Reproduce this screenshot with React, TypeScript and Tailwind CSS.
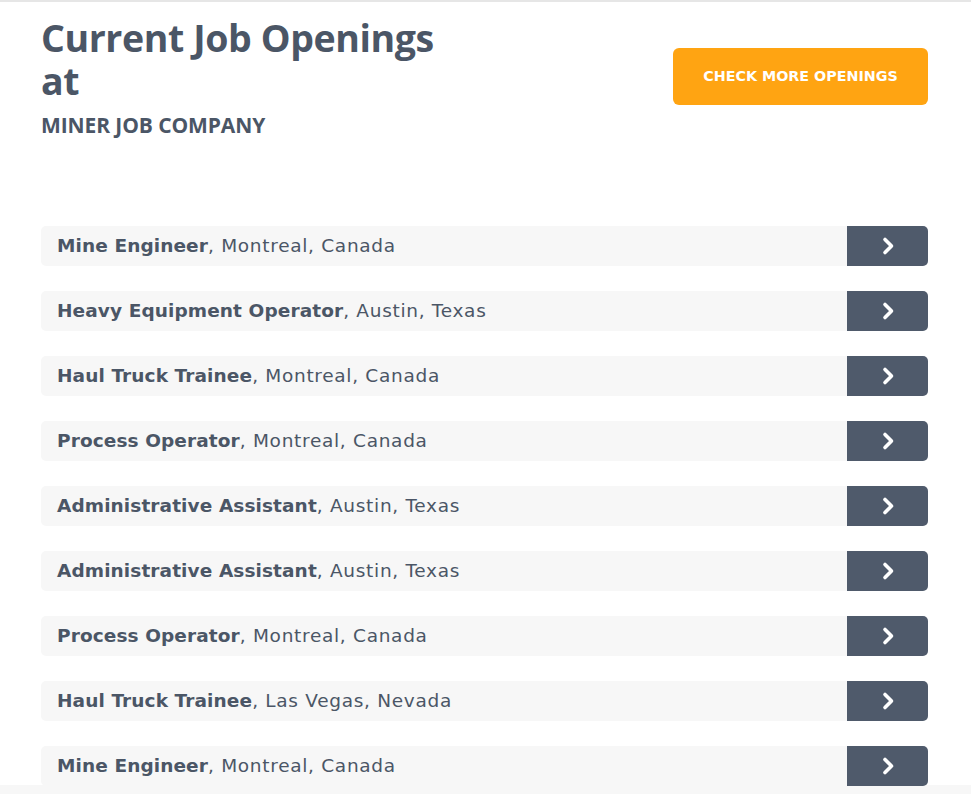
const jobs = [
  { title: 'Mine Engineer', place: 'Montreal, Canada' },
  { title: 'Heavy Equipment Operator', place: 'Austin, Texas' },
  { title: 'Haul Truck Trainee', place: 'Montreal, Canada' },
  { title: 'Process Operator', place: 'Montreal, Canada' },
  { title: 'Administrative Assistant', place: 'Austin, Texas' },
  { title: 'Administrative Assistant', place: 'Austin, Texas' },
  { title: 'Process Operator', place: 'Montreal, Canada' },
  { title: 'Haul Truck Trainee', place: 'Las Vegas, Nevada' },
  { title: 'Mine Engineer', place: 'Montreal, Canada' },
];

const Chevron = () => (
  <svg width="14" height="20" viewBox="0 0 14 20" fill="none">
    <path d="M4 3.5l6.5 6.5-6.5 6.5" stroke="white" strokeWidth="3.6" strokeLinecap="round" strokeLinejoin="round" />
  </svg>
);

const App = () => {
  return (
    <div className="min-h-[794px] bg-white text-[#4b5666] font-['Open_Sans',sans-serif] border-t-2 border-[#e6e6e6]">
      <div className="ml-[41px] mr-[43px] pt-[14px]">
        <div className="flex justify-between items-start">
          <div className="w-[420px]">
            <h1 className="text-[37.5px] leading-[43px] font-bold tracking-[-0.4px]">
              Current Job Openings at
            </h1>
            <div className="mt-[8px] text-[21px] font-bold tracking-[-0.1px] uppercase">Miner Job Company</div>
          </div>
          <button className="mt-[32px] w-[255px] h-[57px] rounded-[6px] bg-[#ffa412] text-white text-[14.3px] font-bold uppercase font-['DejaVu_Sans',sans-serif]">
            Check more openings
          </button>
        </div>

        <div className="mt-[84px] flex flex-col gap-[25px]">
          {jobs.map((job, i) => (
            <div key={i} className="flex h-[40px] rounded-[5px] bg-[#f7f7f7]">
              <div className="flex-1 flex items-center pl-[16px] text-[18.5px] font-['DejaVu_Sans',sans-serif]">
                <span className="font-bold tracking-[0.1px]">{job.title}</span>
                <span className="tracking-[0.7px]">, {job.place}</span>
              </div>
              <div className="w-[81px] flex items-center justify-center bg-[#4f5a6b] rounded-r-[5px]">
                <Chevron />
              </div>
            </div>
          ))}
        </div>
      </div>
      <div className="mt-[-1px] h-[20px] bg-[#f7f7f7]" />
    </div>
  );
};

export default App;
